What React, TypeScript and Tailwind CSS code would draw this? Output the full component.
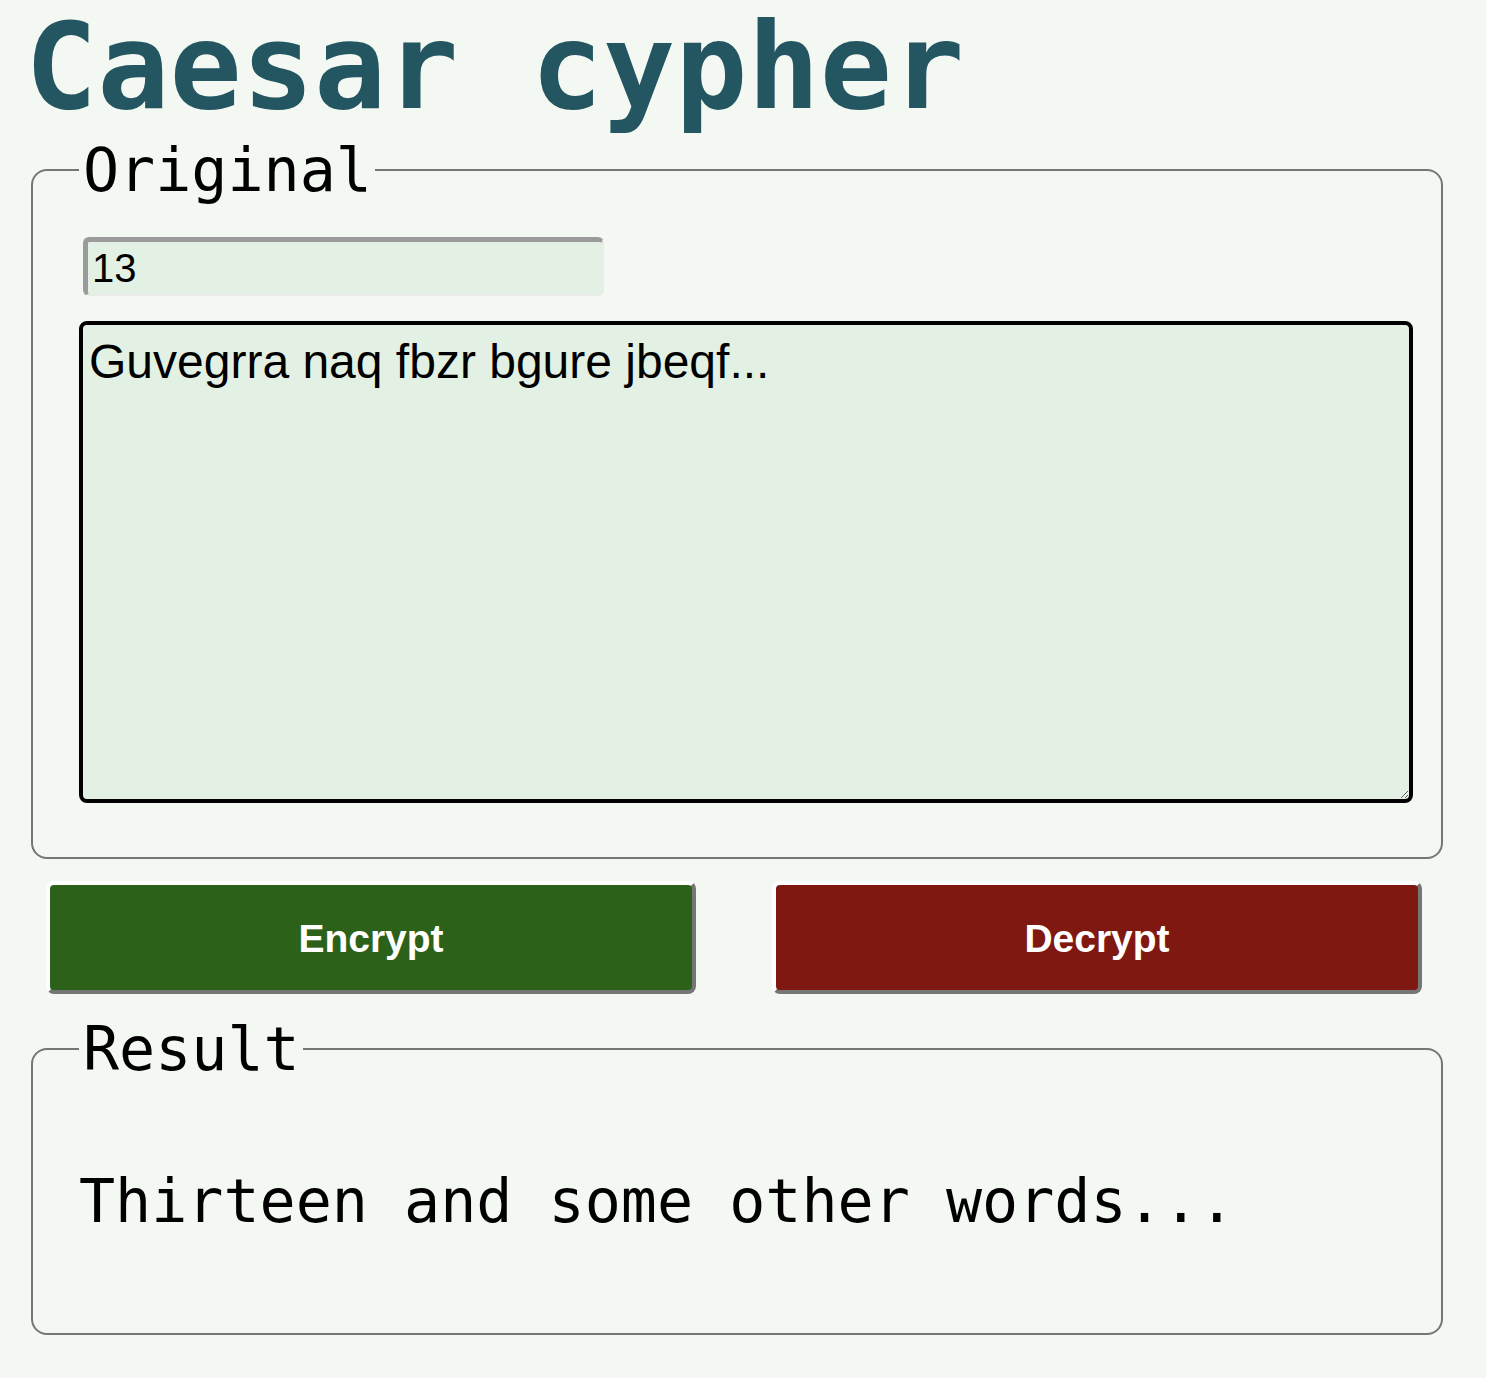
import React, { useState } from 'react';

const shift = (text: string, n: number) =>
  text.replace(/[a-z]/gi, (ch) => {
    const base = ch <= 'Z' ? 65 : 97;
    return String.fromCharCode(((ch.charCodeAt(0) - base + n + 26 * 10) % 26) + base);
  });

export default function App() {
  const [key, setKey] = useState('13');
  const [text, setText] = useState('Guvegrra naq fbzr bgure jbeqf...');
  const [result, setResult] = useState('Thirteen and some other words...');

  const k = parseInt(key, 10) || 0;

  return (
    <div className="min-h-screen bg-[#f4f8f3] pl-[31px] pb-[40px] font-['DejaVu_Sans_Mono',monospace] text-black">
      <h1 className="-ml-[6px] text-[120px] font-bold leading-[134px] text-[#235660]">Caesar cypher</h1>

      <fieldset className="mt-[1px] w-[1412px] rounded-2xl border-2 border-[#767676] pl-[46px] pr-[28px] pt-[32px] pb-[54px]">
        <legend className="pl-[4px] pr-[3px] text-[60px] leading-[70px]">Original</legend>
        <input
          value={key}
          onChange={(e) => setKey(e.target.value)}
          className="ml-[4px] block h-[59px] w-[521px] rounded-md border-t-[5px] border-l-[5px] border-r-2 border-b-2 border-t-[#9b9b9b] border-l-[#9b9b9b] border-r-[#e8ebe8] border-b-[#e8ebe8] bg-[#e3f1e4] pl-[4px] font-['Liberation_Sans',Arial,sans-serif] text-[40px] outline-none"
        />
        <textarea
          value={text}
          onChange={(e) => setText(e.target.value)}
          className="mt-[25px] block h-[482px] w-[1334px] rounded-lg border-4 border-black bg-[#e3f1e4] pl-[6px] pt-[9px] font-['Liberation_Sans',Arial,sans-serif] text-[48px] leading-[55px] outline-none"
        />
      </fieldset>

      <div className="mt-[22px] ml-[15px] flex gap-[76px]">
        <button
          onClick={() => setResult(shift(text, k))}
          className="h-[113px] w-[650px] rounded-lg border-4 border-t-white border-l-white border-r-[#767676] border-b-[#767676] bg-[#2c6119] pt-[3px] font-['Liberation_Sans',Arial,sans-serif] text-[39px] font-bold text-white"
        >
          Encrypt
        </button>
        <button
          onClick={() => setResult(shift(text, -k))}
          className="h-[113px] w-[650px] rounded-lg border-4 border-t-white border-l-white border-r-[#767676] border-b-[#767676] bg-[#801812] pt-[3px] font-['Liberation_Sans',Arial,sans-serif] text-[39px] font-bold text-white"
        >
          Decrypt
        </button>
      </div>

      <fieldset className="mt-[20px] w-[1412px] rounded-2xl border-2 border-[#767676] pl-[46px] pr-[28px] pb-[97px]">
        <legend className="pl-[4px] pr-[3px] text-[60px] leading-[70px]">Result</legend>
        <p className="mt-[82px] text-[60px] leading-[70px]">{result}</p>
      </fieldset>
    </div>
  );
}
